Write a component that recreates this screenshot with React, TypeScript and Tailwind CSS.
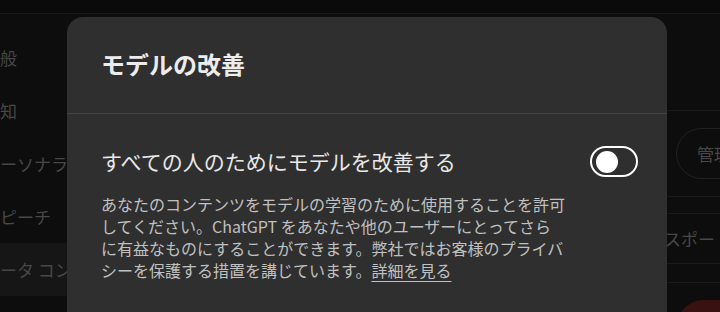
const sidebarItems = ['一般', '通知', 'パーソナライズ', 'スピーチ', 'データ コントロール'];

function Toggle() {
  return (
    <div className="flex h-[31px] w-[48px] shrink-0 items-center rounded-full border-2 border-white pl-[4px]">
      <div className="h-[22px] w-[22px] rounded-full bg-white" />
    </div>
  );
}

export default function App() {
  return (
    <div
      className="relative h-[312px] w-[720px] overflow-hidden bg-[#0d0d0d]"
      style={{ fontFamily: '"Noto Sans CJK JP", "Noto Sans", sans-serif' }}
    >
      {/* dimmed settings page behind the dialog */}
      <div className="h-[14px] border-b border-[#1a1a1a] bg-[#0a0a0a]" />
      <div className="flex">
        <nav className="-ml-[17px] flex w-[180px] shrink-0 flex-col pt-[17px]">
          {sidebarItems.map((label, i) => (
            <div
              key={label}
              className={`flex h-[53px] items-center whitespace-nowrap text-[17px] text-[#474747] ${
                i === sidebarItems.length - 1 ? 'bg-[#161616]' : ''
              }`}
            >
              {label}
            </div>
          ))}
        </nav>
        <main className="flex min-w-0 flex-1 flex-col">
          <div className="h-[97px] border-b border-[#1b1b1b]" />
          <div className="flex h-[86px] items-center border-b border-[#1b1b1b]">
            <div className="-mr-[46px] ml-auto flex h-[51px] w-[90px] items-center rounded-full border border-[#222222] pl-[20px] text-[17px] text-[#474747]">
              管理
            </div>
          </div>
          <div className="h-[17px] border-b border-[#1b1b1b]" />
          <div className="flex h-[50px] items-center border-b border-[#1b1b1b]">
            <span className="-mr-[12px] ml-auto whitespace-nowrap text-[17px] text-[#474747]">エクスポート</span>
          </div>
          <div className="h-[19px] border-b border-[#1b1b1b]" />
          <div className="flex pt-[17px]">
            <div className="-mr-[38px] ml-auto h-[50px] w-[80px] rounded-full bg-[#3a1111]" />
          </div>
        </main>
      </div>

      {/* dialog */}
      <div className="absolute left-[67px] top-[17px] h-[330px] w-[600px] rounded-[16px] bg-[#2f2f2f]">
        <div className="flex h-[97px] items-center border-b border-[#444444] px-[34px] pb-[3px]">
          <h2 className="text-[24px] font-semibold text-[#ececec]">モデルの改善</h2>
        </div>
        <div className="pl-[34px] pr-[29px] pt-[32px]">
          <div className="flex items-center justify-between">
            <span className="text-[21px] text-[#e8e8e8]">すべての人のためにモデルを改善する</span>
            <Toggle />
          </div>
          <p className="mt-[15px] whitespace-nowrap text-[16px] leading-[22px] text-[#c0c0c0]">
            あなたのコンテンツをモデルの学習のために使用することを許可
            <br />
            してください。ChatGPT をあなたや他のユーザーにとってさら
            <br />
            に有益なものにすることができます。弊社ではお客様のプライバ
            <br />
            シーを保護する措置を講じています。
            <a className="underline underline-offset-[4px]">詳細を見る</a>
          </p>
        </div>
      </div>
    </div>
  );
}
